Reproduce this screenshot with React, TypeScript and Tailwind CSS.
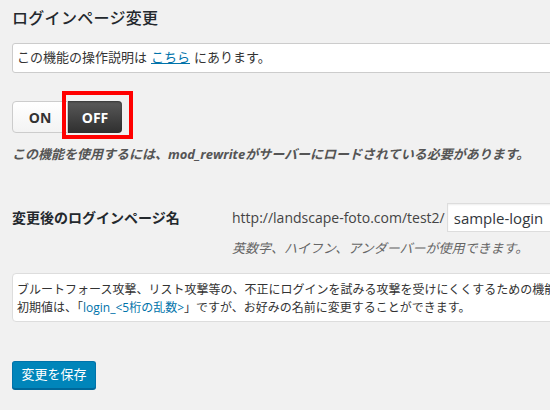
import React from 'react';

const FONT = "font-['Open_Sans','Noto_Sans_CJK_JP',sans-serif]";

export default function App() {
  return (
    <div className={`w-[550px] h-[410px] overflow-hidden bg-[#f1f1f1] text-[13px] text-[#444] ${FONT}`}>
      <div className="pl-3 pt-[6px] w-[700px]">
        <h2 className="text-[16px] leading-6 font-medium text-[#23282d] tracking-[0.3px]">ログインページ変更</h2>

        <div className="mt-[13px] bg-white border border-[#ccc] rounded-l-[3px] h-[30px] pl-[4px] flex items-center text-[#333]">
          <span>この機能の操作説明は </span>
          <a href="#" className="text-[#0073aa] underline mx-[4px]">こちら</a>
          <span>にあります。</span>
        </div>

        <div className="relative mt-[28px] flex h-[32px] w-[110px]">
          <button className="w-[56px] h-full border border-[#ccc] rounded-l-[4px] bg-gradient-to-b from-white to-[#f3f3f3] font-bold text-[14px] text-[#333]">
            ON
          </button>
          <button className="w-[54px] h-full rounded-r-[4px] bg-gradient-to-b from-[#5a5a5a] to-[#2f2f2f] font-bold text-[14px] text-white shadow-[inset_0_1px_2px_rgba(0,0,0,0.4)]">
            OFF
          </button>
          <div className="absolute left-[50px] top-[-10px] w-[71px] h-[48px] border-4 border-[#ff0000]" />
        </div>

        <p className="mt-[11px] leading-5 font-bold italic text-[#555]">
          この機能を使用するには、mod_rewriteがサーバーにロードされている必要があります。
        </p>

        <div className="mt-[39px] flex items-center whitespace-nowrap">
          <div className="w-[220px] shrink-0 font-bold text-[14px] text-[#23282d]">変更後のログインページ名</div>
          <span className="shrink-0 text-[14px] text-[#444]">http://landscape-foto.com/test2/</span>
          <input
            readOnly
            value="sample-login"
            className="ml-[2px] shrink-0 h-[29px] w-[200px] bg-white border border-[#ddd] shadow-[inset_0_1px_2px_rgba(0,0,0,0.07)] px-[6px] text-[15px] text-[#32373c] outline-none"
          />
        </div>
        <p className="mt-[7px] ml-[220px] leading-[18px] italic text-[#666]">英数字、ハイフン、アンダーバーが使用できます。</p>

        <div className="mt-[16px] bg-white border border-[#ddd] rounded-l-[4px] pl-[4px] pt-[7px] pb-[4px] leading-[18px] text-[12px] text-[#333] whitespace-nowrap overflow-hidden">
          <div>ブルートフォース攻撃、リスト攻撃等の、不正にログインを試みる攻撃を受けにくくするための機能です。</div>
          <div>
            初期値は、「<span className="text-[#0073aa]">login_&lt;5桁の乱数&gt;</span>」ですが、お好みの名前に変更することができます。
          </div>
        </div>

        <button className="mt-[39px] w-[84px] h-[28px] bg-[#0085ba] border border-[#0073aa] border-b-[#006799] rounded-[3px] text-white text-[13px] shadow-[0_1px_0_#006799]">
          変更を保存
        </button>
      </div>
    </div>
  );
}
